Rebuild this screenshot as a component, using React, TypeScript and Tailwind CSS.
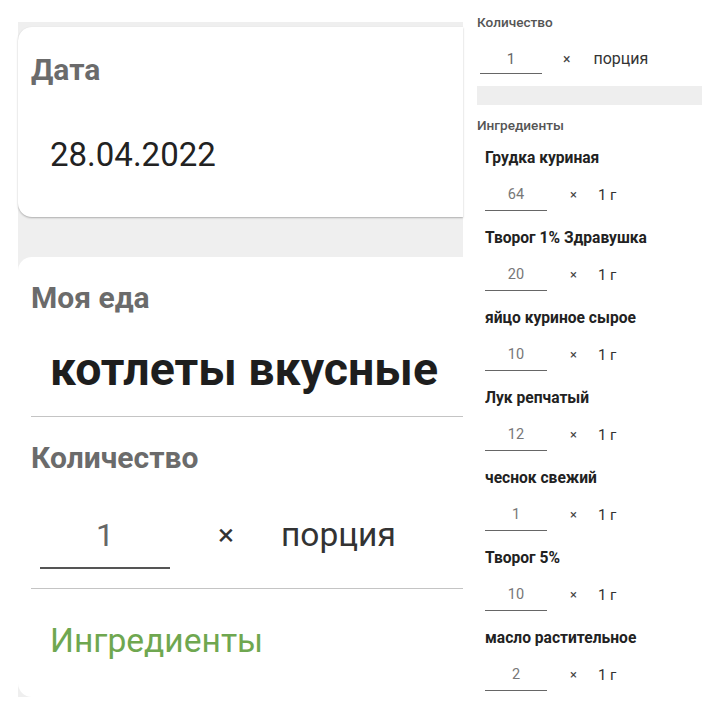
import React from "react";

type Ingredient = { name: string; amount: string };

const ingredients: Ingredient[] = [
  { name: "Грудка куриная", amount: "64" },
  { name: "Творог 1% Здравушка", amount: "20" },
  { name: "яйцо куриное сырое", amount: "10" },
  { name: "Лук репчатый", amount: "12" },
  { name: "чеснок свежий", amount: "1" },
  { name: "Творог 5%", amount: "10" },
  { name: "масло растительное", amount: "2" },
];

function ZoomedForm() {
  return (
    <div className="ml-[18px] w-[445px] shrink-0 pt-[22px]">
      <div className="bg-[#efefef] pt-[5px]">
        {/* Дата */}
        <div className="h-[190px] rounded-l-[14px] bg-white pl-[13px] pt-[25px] shadow-[0_1px_2px_rgba(0,0,0,0.28)]">
          <div className="text-[30px] font-bold leading-[36px] text-[#6b6b6b]">Дата</div>
          <div className="mt-[47px] pl-[19px] text-[33px] leading-[40px] text-[#222]">28.04.2022</div>
        </div>

        <div className="h-[40px]" />

        {/* Моя еда */}
        <div className="h-[440px] rounded-l-[14px] bg-white pt-[23px]">
          <div className="pl-[13px] text-[30px] font-bold leading-[36px] text-[#6b6b6b]">Моя еда</div>
          <div className="mt-[26px] pl-[32px] text-[46.5px] font-bold leading-[54px] text-[#1e1e1e]">котлеты вкусные</div>
          <div className="ml-[13px] mt-[20px] h-px bg-[#c4c4c4]" />

          <div className="mt-[23px] pl-[13px] text-[30px] font-bold leading-[36px] text-[#6b6b6b]">Количество</div>
          <div className="mt-[39px] flex items-start">
            <div className="ml-[22px] w-[130px] border-b-2 border-[#555] pb-[12px] text-center text-[32px] leading-[40px] text-[#666]">
              1
            </div>
            <div className="ml-[48px] text-[30px] leading-[40px] text-[#333]">×</div>
            <div className="ml-[47px] text-[33.5px] leading-[40px] text-[#333]">порция</div>
          </div>
          <div className="ml-[13px] mt-[19px] h-px bg-[#c4c4c4]" />

          <div className="mt-[32px] pl-[32px] text-[33.6px] leading-[40px] text-[#6fa750]">Ингредиенты</div>
        </div>
      </div>
    </div>
  );
}

function FullForm() {
  return (
    <div className="ml-[14px] flex-1 pt-[14px]">
      <div className="text-[13.6px] font-medium leading-[16px] text-[#555]">Количество</div>
      <div className="mt-[19px] flex items-start">
        <div className="ml-[3px] w-[62px] border-b-[1.5px] border-[#666] pb-[4px] text-center text-[15px] leading-[20px] text-[#666]">
          1
        </div>
        <div className="ml-[21px] text-[14px] leading-[20px] text-[#444]">×</div>
        <div className="ml-[23px] text-[16px] leading-[20px] text-[#333]">порция</div>
      </div>
      <div className="mt-[12px] h-[19px] w-[225px] bg-[#eeeeee]" />

      <div className="mt-[12px] text-[13.6px] font-medium leading-[16px] text-[#555]">Ингредиенты</div>
      <div className="mt-[15px] flex flex-col pl-[8px]">
        {ingredients.map((item) => (
          <div key={item.name} className="h-[80px]">
            <div className="text-[15.6px] font-bold leading-[20px] text-[#222]">{item.name}</div>
            <div className="mt-[17px] flex items-start">
              <div className="w-[62px] border-b-[1.5px] border-[#666] pb-[5px] text-center text-[14.5px] leading-[20px] text-[#777]">
                {item.amount}
              </div>
              <div className="ml-[23px] text-[13px] leading-[20px] text-[#444]">×</div>
              <div className="ml-[21px] text-[15px] leading-[20px] text-[#333]">1 г</div>
            </div>
          </div>
        ))}
      </div>
    </div>
  );
}

export default function App() {
  return (
    <div
      className="flex h-[712px] w-[720px] overflow-hidden bg-white"
      style={{ fontFamily: "Roboto, 'Noto Sans', sans-serif" }}
    >
      <ZoomedForm />
      <FullForm />
    </div>
  );
}
